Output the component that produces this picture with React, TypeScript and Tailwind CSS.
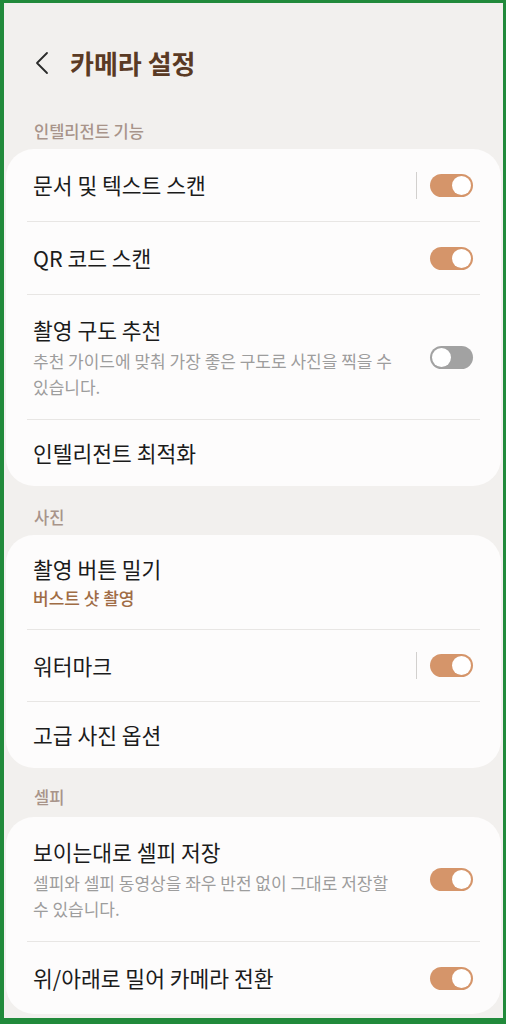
import React from "react";

const font = { fontFamily: '"Noto Sans CJK KR", "Noto Sans", sans-serif' };

function Toggle({ on }: { on: boolean }) {
  return (
    <div
      className={`relative h-[23px] w-[43px] shrink-0 rounded-full ${
        on ? "bg-[#d5956a]" : "bg-[#a2a2a2]"
      }`}
    >
      <div
        className={`absolute top-[2px] h-[19px] w-[19px] rounded-full bg-white ${
          on ? "right-[2px]" : "left-[2px]"
        }`}
      />
    </div>
  );
}

function Divider() {
  return <div className="mx-[21px] h-px bg-[#e8e6e4]" />;
}

type RowProps = {
  title: string;
  sub?: string;
  accent?: string;
  toggle?: boolean;
  sep?: boolean;
  h: string;
};

function Row({ title, sub, accent, toggle, sep, h }: RowProps) {
  return (
    <div className={`flex items-center pl-[27px] pr-[28px] ${h}`}>
      <div className="flex min-w-0 flex-1 flex-col">
        <div className="text-[21.5px] leading-[30px] text-[#1b1b1b]">{title}</div>
        {sub && (
          <div className="mt-[3px] break-keep pr-[30px] text-[17px] leading-[26px] text-[#9d9d9d]">
            {sub}
          </div>
        )}
        {accent && (
          <div className="mt-[1px] text-[17px] font-medium leading-[26px] text-[#a06c45]">
            {accent}
          </div>
        )}
      </div>
      {sep && <div className="mr-[13px] h-[27px] w-px bg-[#d2d0ce]" />}
      {toggle !== undefined && <Toggle on={toggle} />}
    </div>
  );
}

function Section({ label, pt, pb }: { label: string; pt: string; pb: string }) {
  return (
    <div className={`px-[30px] ${pt} ${pb} text-[16.5px] font-medium leading-[24px] text-[#a8948a]`}>
      {label}
    </div>
  );
}

export default function App() {
  return (
    <div
      style={font}
      className="h-[1024px] w-[506px] overflow-hidden border-b-[6px] border-l-4 border-r-[3px] border-t-[3px] border-[#218a3b] bg-[#f2f0ee]"
    >
      <div className="flex h-[110px] items-start pt-[43px]">
        <div className="ml-[31px] flex h-[34px] w-[20px] items-center">
          <svg width="14" height="24" viewBox="0 0 14 24" fill="none">
            <path d="M12 2 L2 12 L12 22" stroke="#2a2a2a" strokeWidth="1.8" strokeLinecap="round" strokeLinejoin="round" />
          </svg>
        </div>
        <div className="ml-[15px] text-[26px] font-bold leading-[34px] text-[#5a3a24]">카메라 설정</div>
      </div>

      <Section label="인텔리전트 기능" pt="pt-[6px]" pb="pb-[6px]" />
      <div className="mx-[2px] rounded-[28px] bg-[#fdfcfc]">
        <Row title="문서 및 텍스트 스캔" toggle sep h="h-[72px]" />
        <Divider />
        <Row title="QR 코드 스캔" toggle h="h-[72px]" />
        <Divider />
        <Row
          title="촬영 구도 추천"
          sub="추천 가이드에 맞춰 가장 좋은 구도로 사진을 찍을 수 있습니다."
          toggle={false}
          h="h-[124px]"
        />
        <Divider />
        <Row title="인텔리전트 최적화" h="h-[66px]" />
      </div>

      <Section label="사진" pt="pt-[19px]" pb="pb-[6px]" />
      <div className="mx-[2px] rounded-[28px] bg-[#fdfcfc]">
        <Row title="촬영 버튼 밀기" accent="버스트 샷 촬영" h="h-[94px]" />
        <Divider />
        <Row title="워터마크" toggle sep h="h-[71px]" />
        <Divider />
        <Row title="고급 사진 옵션" h="h-[66px]" />
      </div>

      <Section label="셀피" pt="pt-[17px]" pb="pb-[8px]" />
      <div className="mx-[2px] rounded-[28px] bg-[#fdfcfc]">
        <Row
          title="보이는대로 셀피 저장"
          sub="셀피와 셀피 동영상을 좌우 반전 없이 그대로 저장할 수 있습니다."
          toggle
          h="h-[124px]"
        />
        <Divider />
        <Row title="위/아래로 밀어 카메라 전환" toggle h="h-[72px]" />
      </div>
    </div>
  );
}
